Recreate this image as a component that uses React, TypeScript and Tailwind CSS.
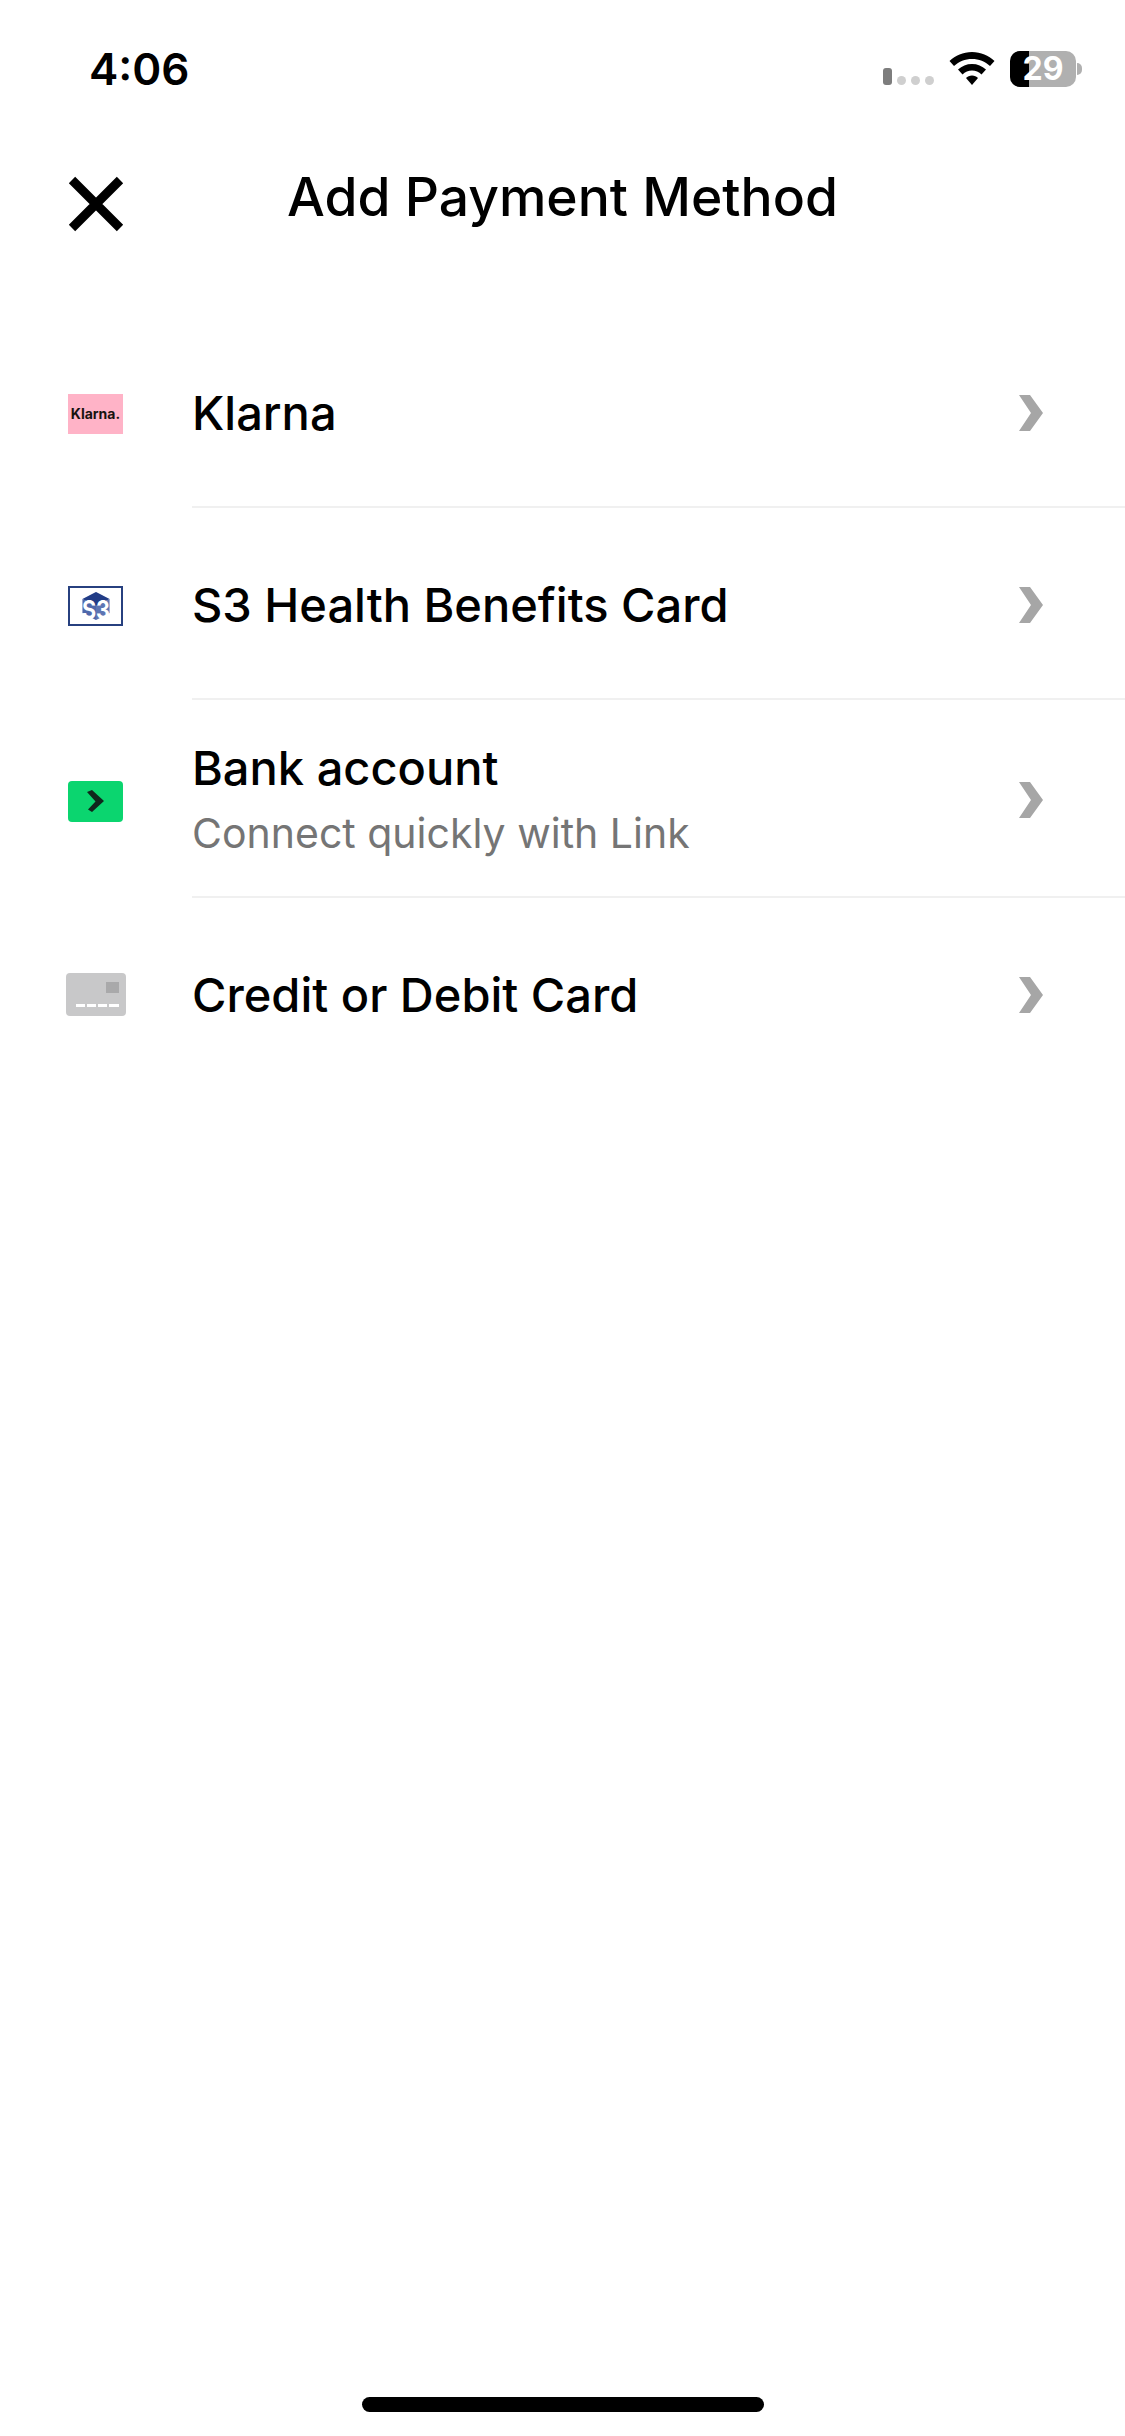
const font = "[font-family:'Inter',sans-serif]";

function Chevron() {
  return (
    <svg width="24" height="36" viewBox="0 0 24 36" className="shrink-0">
      <path d="M0 0H11L24 18L11 36H0L12 18Z" fill="#a6a6a6" />
    </svg>
  );
}

function KlarnaIcon() {
  return (
    <div className="flex h-10 w-[55px] items-center justify-center bg-[#ffb3c7]">
      <span className="text-[14px] font-bold leading-none text-[#17120f] [font-family:'Inter',sans-serif]">Klarna.</span>
    </div>
  );
}

function S3Icon() {
  return (
    <div className="flex h-10 w-[55px] items-center justify-center border-2 border-[#27407f] bg-white">
      <svg width="30" height="30" viewBox="0 0 30 30" className="overflow-visible">
        <path d="M15 1L28.500 8V22L15 29L1.500 22V8Z" fill="#c9d2e8" />
        <path d="M15 1L28.500 8L15 15L1.500 8Z" fill="#213c86" />
        <path d="M1.500 8L15 15V29L1.500 22Z" fill="#4f68aa" />
        <path d="M28.500 8L15 15V29L28.500 22Z" fill="#5d75b3" />
        <text x="1" y="28" fontSize="26" fontWeight="700" textLength="28" lengthAdjust="spacingAndGlyphs" fill="#ffffff" fontFamily="Inter, sans-serif">S3</text>
      </svg>
    </div>
  );
}

function LinkIcon() {
  return (
    <div className="flex h-[41px] w-[55px] items-center justify-center rounded-[4px] bg-[#0bd56f]">
      <svg width="20" height="24" viewBox="0 0 20 24">
        <path d="M1 3L6 1L18 12L6 23L2 20.500L9.500 12.500Z" fill="#10261c" />
      </svg>
    </div>
  );
}

function CardIcon() {
  return (
    <div className="relative -ml-[2px] flex h-[43px] w-[60px] items-end justify-end rounded-[4px] bg-[#c8c8c9] pb-[9px] pr-[7px]">
      <div className="absolute right-[7px] top-[9px] h-[11px] w-[13px] bg-[#a9a9aa]" />
      <div className="flex gap-[2px]">
        <div className="h-[3px] w-[9px] bg-white" />
        <div className="h-[3px] w-[9px] bg-white" />
        <div className="h-[3px] w-[9px] bg-white" />
        <div className="h-[3px] w-[10px] bg-white" />
      </div>
    </div>
  );
}

function Row({ icon, title, sub, h, last }: { icon: React.ReactNode; title: string; sub?: string; h: string; last?: boolean }) {
  return (
    <div className={`flex ${h} items-stretch`}>
      <div className="flex w-[192px] shrink-0 items-center pl-[68px] pt-[4px]">{icon}</div>
      <div className={`flex flex-1 items-center justify-between pr-[82px] pt-[4px] ${last ? "" : "border-b-2 border-[#f0f0f0]"}`}>
        <div className="flex flex-col">
          <span className="text-[47px] font-medium leading-[66px] text-black">{title}</span>
          {sub && <span className="text-[41px] leading-[64px] text-[#757575]">{sub}</span>}
        </div>
        <Chevron />
      </div>
    </div>
  );
}

export default function App() {
  return (
    <div className={`flex h-[2436px] w-[1125px] flex-col bg-white ${font}`}>
      <div className="flex h-[136px] items-center justify-between pl-[89px] pr-[43px] pt-[2px]">
        <span className="text-[44px] font-semibold leading-none text-black">4:06</span>
        <div className="flex items-center gap-[15px]">
          <div className="flex items-end gap-[5px] pt-[15px]">
            <div className="h-[17px] w-[9px] rounded-[3px] bg-[#7d7d7d]" />
            <div className="h-[9px] w-[9px] rounded-full bg-[#cfcfcf]" />
            <div className="h-[9px] w-[9px] rounded-full bg-[#cfcfcf]" />
            <div className="h-[9px] w-[9px] rounded-full bg-[#cfcfcf]" />
          </div>
          <svg width="46" height="34" viewBox="0 0 46 34">
            <path d="M23 0C14 0 6.500 3.500 0.500 9L5 14C10 9.500 16 7 23 7C30 7 36 9.500 41 14L45.500 9C39.500 3.500 32 0 23 0Z" fill="#000" />
            <path d="M23 12C17.500 12 13 14 9 17.500L13.500 22.500C16 20 19.500 18.500 23 18.500C26.500 18.500 30 20 32.500 22.500L37 17.500C33 14 28.500 12 23 12Z" fill="#000" />
            <path d="M23 23.500C20.500 23.500 18.500 24.500 17 26L23 33L29 26C27.500 24.500 25.500 23.500 23 23.500Z" fill="#000" />
          </svg>
          <div className="flex items-center gap-[1px]">
            <div className="relative flex h-[36px] w-[66px] items-center justify-center rounded-[10px] bg-[#b0b0b0]">
              <div className="absolute inset-y-0 left-0 w-[19px] rounded-l-[10px] bg-black" />
              <span className="relative text-[32px] font-bold leading-none text-white">29</span>
            </div>
            <div className="h-[12px] w-[5px] rounded-r-full bg-[#b0b0b0]" />
          </div>
        </div>
      </div>
      <div className="relative flex h-[122px] items-center justify-center">
        <div className="absolute left-[68px] top-[40px]">
          <svg width="56" height="56" viewBox="0 0 56 56">
            <path d="M4 4L52 52M52 4L4 52" stroke="#000" strokeWidth="9" />
          </svg>
        </div>
        <span className="text-[53.400px] font-medium leading-none text-black">Add Payment Method</span>
      </div>
      <div className="mt-[57px] flex flex-col">
        <Row icon={<KlarnaIcon />} title="Klarna" h="h-[193px]" />
        <Row icon={<S3Icon />} title="S3 Health Benefits Card" h="h-[192px]" />
        <Row icon={<LinkIcon />} title="Bank account" sub="Connect quickly with Link" h="h-[198px]" />
        <Row icon={<CardIcon />} title="Credit or Debit Card" h="h-[189px]" last />
      </div>
      <div className="mt-auto flex justify-center pb-[24px]">
        <div className="h-[15px] w-[402px] rounded-full bg-black" />
      </div>
    </div>
  );
}
